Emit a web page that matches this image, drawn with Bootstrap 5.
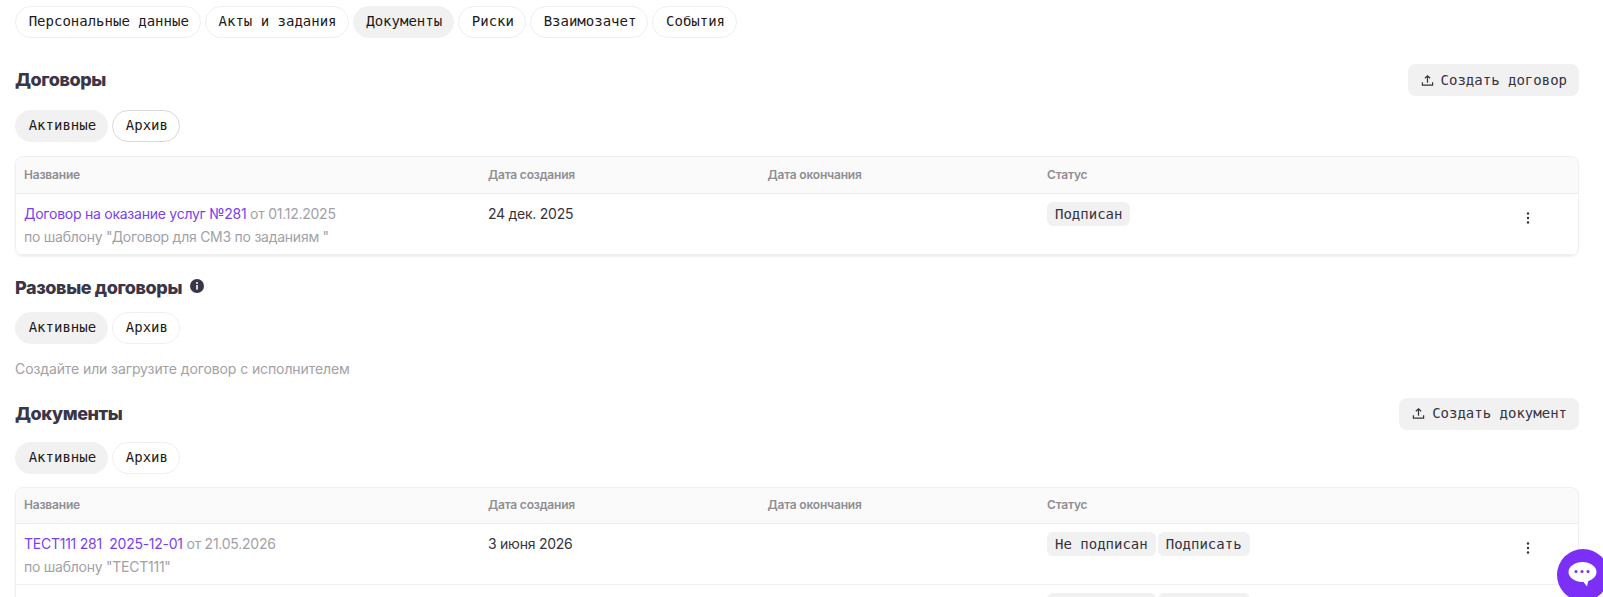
<!DOCTYPE html>
<html lang="ru">
<head>
    <meta charset="UTF-8">
    <meta name="viewport" content="width=device-width, initial-scale=1.0">
    <title>Документы</title>
    <link href="https://cdn.jsdelivr.net/npm/bootstrap@5.3.0/dist/css/bootstrap.min.css" rel="stylesheet">
    <script src="https://cdn.jsdelivr.net/npm/bootstrap@5.3.0/dist/js/bootstrap.bundle.min.js"></script>
    <style>
        html, body { height: 597px; overflow: hidden; }
        body { font-family: Inter, "Noto Sans", sans-serif; font-size: 14px; letter-spacing: -.25px; color: #37323f; background: #fff; }
        .page-wrap { padding: 6px 24px 0 15px; }
        .pill-row { display: flex; gap: 4px; }
        .pill-btn { height: 32px; padding: 0 11px 2px 12.7px; border: 1px solid #efeff0; border-radius: 16px; background: #fff; color: #1c1a20; font-family: "DejaVu Sans Mono", monospace; font-size: 14px; letter-spacing: 0; line-height: 28px; }
        .pill-btn.on { background: #f1f1f2; border-color: #f1f1f2; }
        .pill-btn.focused { border-color: #d9d9db; }
        .sec-title { font-size: 18px; font-weight: 800; letter-spacing: -.4px; color: #3a3547; margin: 0; line-height: 32px; }
        .make-btn { height: 32px; padding: 0 12px 0 13px; border: 0; border-radius: 8px; background: #f1f1f2; color: #37323f; font-family: "DejaVu Sans Mono", monospace; font-size: 14px; letter-spacing: 0; display: flex; align-items: center; gap: 7px; }
        .head-one { margin: 26px 0 14px; }
        .head-two { margin-top: 16px; margin-bottom: 8px; }
        .head-three { margin: 19px 0 12px; }
        .doc-box { border: 1px solid #efeff0; border-radius: 8px; box-shadow: 0 1px 2px rgba(0,0,0,.06); overflow: hidden; }
        .box-one { margin-top: 14px; }
        .box-two { margin-top: 13px; }
        .doc-table { width: 100%; table-layout: fixed; margin: 0; }
        .doc-table th { height: 36px; padding: 0 8px; background: #fafafa; color: #8f8e93; font-size: 12px; font-weight: 600; letter-spacing: -.2px; border-bottom: 1px solid #ececed; vertical-align: middle; }
        .doc-table td { height: 61px; padding: 8px 8px 4px; line-height: 23px; border-bottom: 1px solid #efeff0; color: #37323f; vertical-align: top; box-shadow: none; }
        .col-name { width: 464px; }
        .col-date { width: 279.5px; }
        .col-status { width: 471px; }
        .doc-link { color: #7a3ff0; text-decoration: none; }
        .gray-txt { color: #a2a1a7; }
        .hint-txt { color: #a2a1a7; letter-spacing: -.1px; margin: 14px 0 0; line-height: 21px; }
        .stat-tag { display: inline-block; height: 24px; padding: 0 8px; margin-right: 2px; border-radius: 6px; background: #f1f1f2; color: #37323f; font-family: "DejaVu Sans Mono", monospace; font-size: 14px; letter-spacing: 0; line-height: 24px; }
        .kebab { width: 20px; text-align: center; line-height: 12px; padding-top: 9px; }
        .chat-bubble { position: fixed; left: 1557px; top: 549px; width: 52px; height: 52px; border-radius: 50%; background: #7b2ff7; display: flex; align-items: center; justify-content: center; }
    </style>
</head>
<body>
<div class="page-wrap">
    <div class="pill-row">
        <button class="pill-btn" type="button">Персональные данные</button>
        <button class="pill-btn" type="button">Акты и задания</button>
        <button class="pill-btn on" type="button">Документы</button>
        <button class="pill-btn" type="button">Риски</button>
        <button class="pill-btn" type="button">Взаимозачет</button>
        <button class="pill-btn" type="button">События</button>
    </div>

    <div class="d-flex justify-content-between align-items-center head-one">
        <h2 class="sec-title">Договоры</h2>
        <button class="make-btn" type="button">
            <svg width="13" height="13" viewBox="0 0 14 14" fill="none" stroke="#37323f" stroke-width="1.3"><path d="M7 9.5V2M4.2 4.6 7 1.9l2.8 2.7M1.5 9v3h11V9"/></svg>
            Создать договор
        </button>
    </div>
    <div class="pill-row">
        <button class="pill-btn on" type="button">Активные</button>
        <button class="pill-btn focused" type="button">Архив</button>
    </div>
    <div class="doc-box box-one">
        <table class="table doc-table">
            <colgroup><col class="col-name"><col class="col-date"><col class="col-date"><col class="col-status"><col></colgroup>
            <thead>
                <tr><th>Название</th><th>Дата создания</th><th>Дата окончания</th><th>Статус</th><th></th></tr>
            </thead>
            <tbody>
                <tr>
                    <td><a class="doc-link" href="#">Договор на оказание услуг №281</a> <span class="gray-txt">от 01.12.2025</span><div class="gray-txt">по шаблону "Договор для СМЗ по заданиям "</div></td>
                    <td>24 дек. 2025</td>
                    <td></td>
                    <td><span class="stat-tag">Подписан</span></td>
                    <td><div class="kebab"><svg width="4" height="12" viewBox="0 0 4 12" fill="#37323f"><circle cx="2" cy="1.5" r="1.2"/><circle cx="2" cy="6" r="1.2"/><circle cx="2" cy="10.5" r="1.2"/></svg></div></td>
                </tr>
            </tbody>
        </table>
    </div>

    <div class="d-flex align-items-center gap-2 head-two">
        <h2 class="sec-title">Разовые договоры</h2>
        <svg class="mb-1" width="14" height="14" viewBox="0 0 14 14"><circle cx="7" cy="7" r="7" fill="#3a3547"/><rect x="6.2" y="6" width="1.6" height="4.6" fill="#fff"/><circle cx="7" cy="4" r="1" fill="#fff"/></svg>
    </div>
    <div class="pill-row">
        <button class="pill-btn on" type="button">Активные</button>
        <button class="pill-btn" type="button">Архив</button>
    </div>
    <p class="hint-txt">Создайте или загрузите договор с исполнителем</p>

    <div class="d-flex justify-content-between align-items-center head-three">
        <h2 class="sec-title">Документы</h2>
        <button class="make-btn" type="button">
            <svg width="13" height="13" viewBox="0 0 14 14" fill="none" stroke="#37323f" stroke-width="1.3"><path d="M7 9.5V2M4.2 4.6 7 1.9l2.8 2.7M1.5 9v3h11V9"/></svg>
            Создать документ
        </button>
    </div>
    <div class="pill-row">
        <button class="pill-btn on" type="button">Активные</button>
        <button class="pill-btn" type="button">Архив</button>
    </div>
    <div class="doc-box box-two">
        <table class="table doc-table">
            <colgroup><col class="col-name"><col class="col-date"><col class="col-date"><col class="col-status"><col></colgroup>
            <thead>
                <tr><th>Название</th><th>Дата создания</th><th>Дата окончания</th><th>Статус</th><th></th></tr>
            </thead>
            <tbody>
                <tr>
                    <td><a class="doc-link" href="#">ТЕСТ111 281&nbsp; 2025-12-01</a> <span class="gray-txt">от 21.05.2026</span><div class="gray-txt">по шаблону "ТЕСТ111"</div></td>
                    <td>3 июня 2026</td>
                    <td></td>
                    <td><span class="stat-tag">Не подписан</span><span class="stat-tag">Подписать</span></td>
                    <td><div class="kebab"><svg width="4" height="12" viewBox="0 0 4 12" fill="#37323f"><circle cx="2" cy="1.5" r="1.2"/><circle cx="2" cy="6" r="1.2"/><circle cx="2" cy="10.5" r="1.2"/></svg></div></td>
                </tr>
                <tr>
                    <td></td>
                    <td></td>
                    <td></td>
                    <td><span class="stat-tag">Не подписан</span><span class="stat-tag">Подписать</span></td>
                    <td></td>
                </tr>
            </tbody>
        </table>
    </div>
</div>

<div class="chat-bubble">
    <svg width="30" height="30" viewBox="0 0 30 30"><ellipse cx="14.5" cy="12" rx="14" ry="10" fill="#fff"/><path d="M14 20l5 6.500 1.500-7z" fill="#fff"/><circle cx="8" cy="11.500" r="1.500" fill="#7b2ff7"/><circle cx="14" cy="11.500" r="1.500" fill="#7b2ff7"/><circle cx="20" cy="11.500" r="1.500" fill="#7b2ff7"/></svg>
</div>
</body>
</html>
